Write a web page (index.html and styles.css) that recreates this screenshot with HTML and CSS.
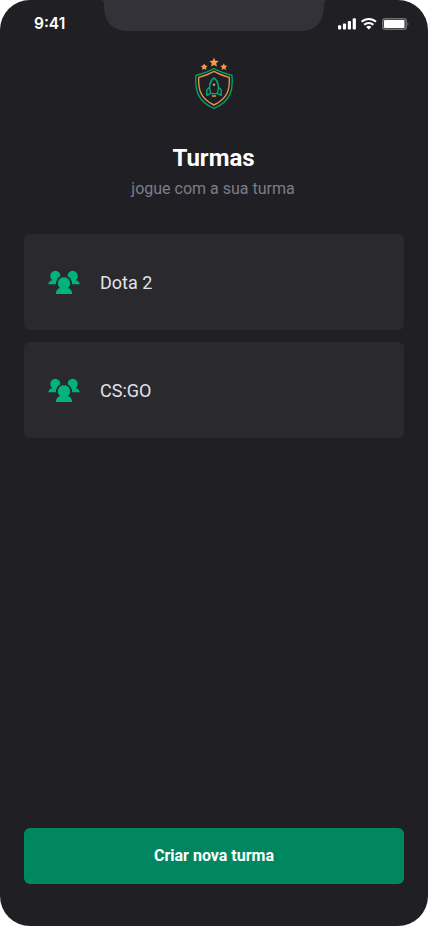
FILE: index.html
```html
<!DOCTYPE html>
<html lang="pt-BR">
<head>
<meta charset="utf-8">
<title>Turmas</title>
<link rel="stylesheet" href="styles.css">
</head>
<body>
<svg class="symbols" aria-hidden="true">
  <symbol id="players" viewBox="0 0 32 24">
    <path d="M2.3 6.3A5.03 5.03 0 1 1 12.3 6.2A9 9 0 0 0 7.9 13.2L8.1 14.3H.3C.3 12 1.8 10.7 4.2 10.2A5 5 0 0 1 2.3 6.3ZM29.7 6.3A5.03 5.03 0 1 0 19.7 6.2A9 9 0 0 1 24.1 13.2L23.9 14.3H31.7C31.7 12 30.2 10.7 27.8 10.2A5 5 0 0 0 29.7 6.3Z"/>
    <path d="M16 7.2A6.1 6.1 0 0 1 19.9 18C22.7 18.8 24.2 21 24.2 24H7.8C7.8 21 9.3 18.8 12.1 18A6.1 6.1 0 0 1 16 7.2Z"/>
  </symbol>
</svg>
<div class="screen">
  <header class="status">
    <span class="time">9:41</span>
    <svg class="notch" width="228" height="31" viewBox="0 0 228 31">
      <path fill="#323238" d="M0 0Q4 0 4 4C4 22 12 31 28 31H200C216 31 224 22 224 4Q224 0 228 0Z"/>
    </svg>
    <svg class="indicators" width="72" height="14" viewBox="0 0 72 14">
      <g fill="#fff">
        <rect x="0" y="8.3" width="3.2" height="4.2" rx="1"/>
        <rect x="4.9" y="6.5" width="3.2" height="6" rx="1"/>
        <rect x="9.8" y="4" width="3.2" height="8.5" rx="1"/>
        <rect x="14.7" y="1.2" width="3.2" height="11.3" rx="1"/>
        <path d="M28.2 9.9q2.6-2.1 5.2 0l-2.6 2.6z"/>
      </g>
      <g fill="none" stroke="#fff" stroke-width="2">
        <path d="M23.6 4.8a10.4 10.4 0 0 1 14.4 0"/>
        <path d="M26.2 7.8a6.6 6.6 0 0 1 9.2 0"/>
      </g>
      <rect x="44.8" y="1.8" width="23.4" height="10.4" rx="2.5" fill="none" stroke="#707073" stroke-width="1.6"/>
      <rect x="46" y="3" width="20.5" height="8" rx="1" fill="#fff"/>
      <path d="M69.5 5.3v3.4q1-.5 1-1.7t-1-1.7z" fill="#707073"/>
    </svg>
  </header>
  <main class="content">
    <svg class="logo" width="40" height="52" viewBox="0 0 40 52">
      <g fill="#f79b4b">
        <path d="M20 .8l1.4 3 3.3.3-2.5 2.2.8 3.3L20 7.9l-3 1.7.8-3.3-2.5-2.2 3.3-.3z"/>
        <path id="star" d="M10.2 6.4l1.1 2.2 2.4.3-1.8 1.7.5 2.4-2.2-1.2L8 13l.5-2.4-1.8-1.7 2.4-.3z"/>
        <use href="#star" x="19.6"/>
      </g>
      <g fill="none" stroke-linejoin="round" transform="translate(0 .4)">
        <path stroke="#009b6c" stroke-width="1.4" d="M20 11.2C15 13.9 9.7 15.8 2 18.1C.7 31.4 3 44.2 20 50.9C37 44.2 39.3 31.4 38 18.1C30.3 15.8 25 13.9 20 11.2Z"/>
        <path stroke="#e69245" stroke-width="1.4" d="M20 14C15.5 16.6 11 18.2 4.7 20C4.1 31.4 6 41 20 47.6C34 41 35.9 31.4 35.3 20C29 18.2 24.5 16.6 20 14Z"/>
        <g stroke="#00a873" stroke-width="1.4">
          <path d="M20 20.5C15 24.2 14.6 31 16.8 36.2H23.2C25.4 31 25 24.2 20 20.5Z"/>
          <path d="M15.4 30.1L12.8 32.4V38L16.8 36M24.6 30.1L27.2 32.4V38L23.2 36"/>
        </g>
        <path stroke="#e69245" stroke-width="1.4" d="M18 38.6h4"/>
      </g>
      <circle cx="20" cy="27.7" r="1.2" fill="#e69245"/>
    </svg>
    <h1 class="title">Turmas</h1>
    <p class="subtitle">jogue com a sua turma</p>
    <div class="list">
      <div class="card"><svg class="icon"><use href="#players"/></svg><span class="name">Dota 2</span></div>
      <div class="card"><svg class="icon"><use href="#players"/></svg><span class="name">CS:GO</span></div>
    </div>
    <button class="create">Criar nova turma</button>
  </main>
</div>
</body>
</html>
```
FILE: styles.css
```css
* { box-sizing: border-box; margin: 0; padding: 0; }
body { background: #fff; font-family: Roboto, sans-serif; }
.symbols { display: none; }
.screen {
  width: 428px;
  height: 926px;
  display: flex;
  flex-direction: column;
  background: #202024;
  border-radius: 30px;
  overflow: hidden;
}
.status {
  height: 48px;
  display: grid;
  grid-template-columns: 100px 228px 100px;
}
.time {
  padding: 14px 0 0 34px;
  font: 600 15.5px/20px Inter, sans-serif;
  color: #fff;
}
.notch { display: block; }
.indicators { margin: 17px 0 0 10px; }
.content {
  flex: 1;
  display: flex;
  flex-direction: column;
  align-items: center;
  padding: 9px 24px 42px;
}
.logo { flex: none; }
.title {
  margin-top: 33px;
  padding-right: 1px;
  font-size: 24px;
  line-height: 32px;
  font-weight: 700;
  color: #fff;
}
.subtitle {
  margin-top: 5px;
  padding-right: 2px;
  font-size: 16px;
  line-height: 20px;
  color: #7c7c8a;
}
.list {
  width: 100%;
  margin-top: 35px;
  display: grid;
  gap: 12px;
}
.card {
  height: 96px;
  display: flex;
  align-items: center;
  gap: 20px;
  padding: 0 24px;
  border-radius: 6px;
  background: #29292e;
  font-size: 18px;
  color: #e1e1e6;
}
.name { line-height: 22px; transform: translateY(.5px); }
.icon { width: 32px; height: 24px; fill: #00b37e; }
.create {
  width: 100%;
  height: 56px;
  margin-top: auto;
  padding-bottom: 2px;
  border: 0;
  border-radius: 6px;
  background: #00875f;
  font: 700 16px Roboto, sans-serif;
  color: #fff;
}
```
